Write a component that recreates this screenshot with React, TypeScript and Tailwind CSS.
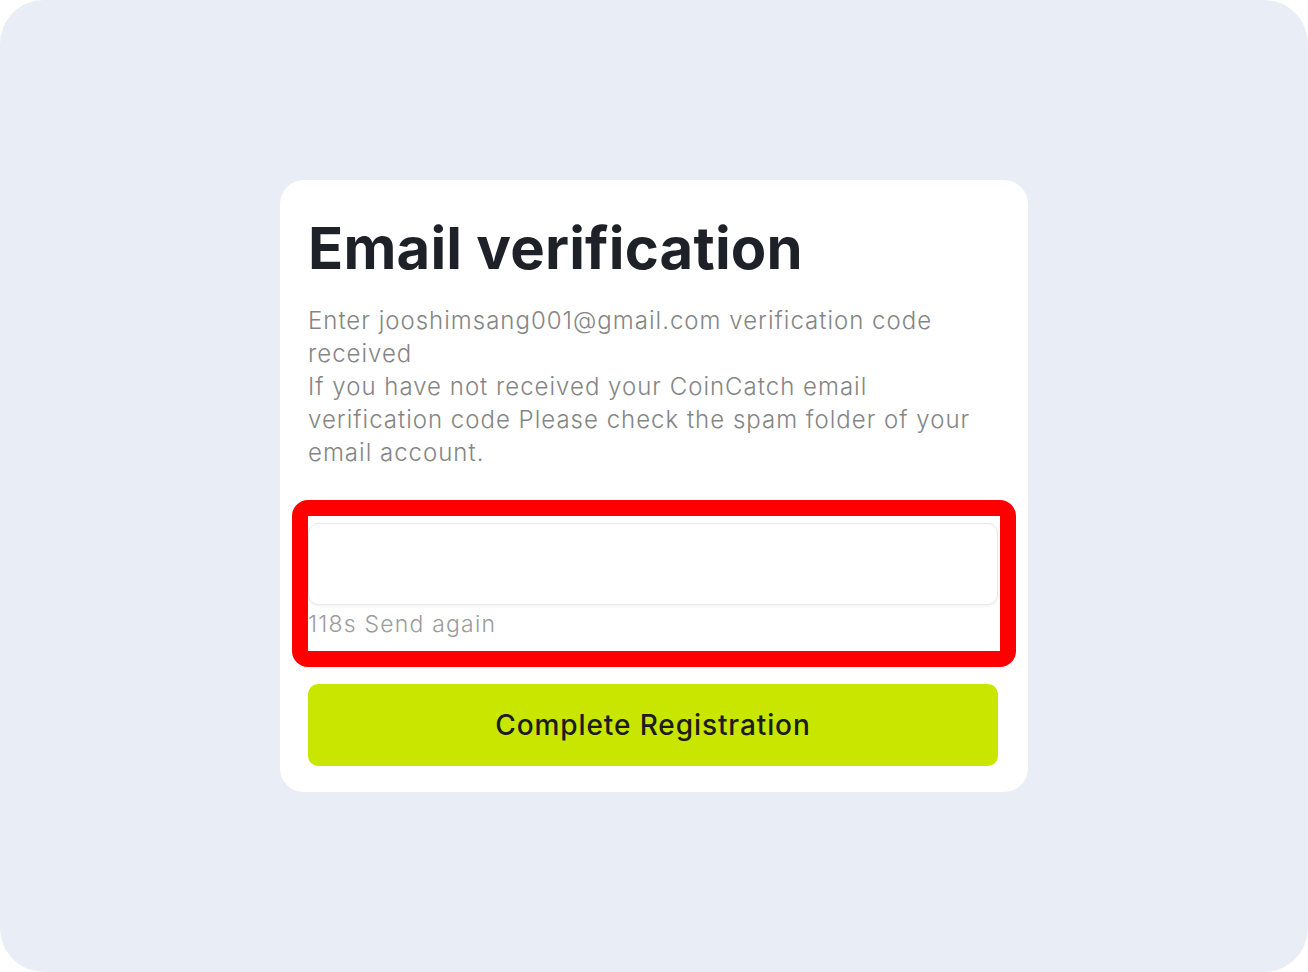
import React from "react";

export default function App() {
  return (
    <div className="w-[1308px] h-[972px] bg-white" style={{ fontFamily: "Inter, 'Noto Sans', sans-serif" }}>
      <div className="w-full h-full rounded-[44px] bg-[#e9edf5] flex items-start justify-center pt-[180px]">
        <div className="w-[748px] bg-white rounded-[24px] pl-[28px] pr-[30px] pt-[33px] pb-[26px] flex flex-col">
          <h1 className="text-[58px] leading-[70px] font-bold text-[#1f2128] tracking-[0.2px] whitespace-nowrap">
            Email verification
          </h1>
          <p className="mt-[21px] text-[24px] leading-[33px] font-light tracking-[1px] text-[#858585] whitespace-nowrap">
            Enter jooshimsang001@gmail.com verification code
            <br />
            received
            <br />
            If you have not received your CoinCatch email
            <br />
            verification code Please check the spam folder of your
            <br />
            email account.
          </p>
          <div className="relative mt-[54px]">
            <div className="h-[82px] rounded-[10px] border-[1.5px] border-[#e8e8e8] bg-white shadow-[0_1px_3px_rgba(0,0,0,0.06)]" />
            <div className="mt-[5px] text-[23px] leading-[28px] font-light tracking-[1.2px] text-[#9c9c9c]">118s Send again</div>
            <div className="absolute left-[-16px] top-[-23px] right-[-18px] bottom-[-29px] border-[16px] border-[#ff0000] rounded-[16px] pointer-events-none" />
          </div>
          <button className="mt-[46px] h-[82px] w-full rounded-[10px] bg-[#c8e600] text-[28px] font-medium tracking-[0.9px] text-[#1c1c1c] flex items-center justify-center">
            Complete Registration
          </button>
        </div>
      </div>
    </div>
  );
}
